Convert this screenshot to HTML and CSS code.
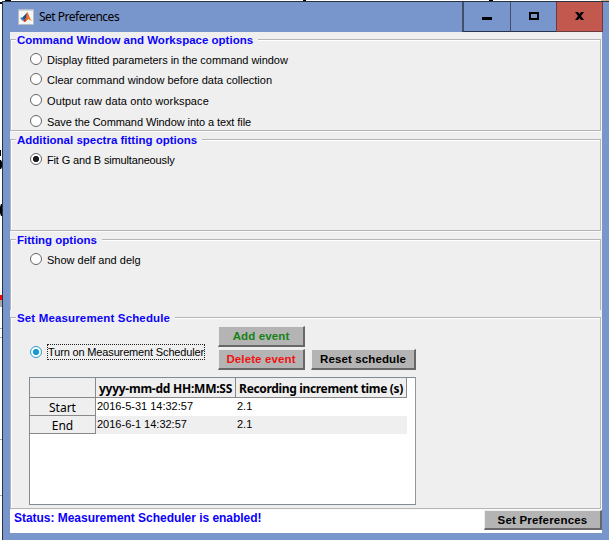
FILE: index.html
```html
<!DOCTYPE html>
<html lang="en">
<head>
<meta charset="utf-8">
<title>Set Preferences</title>
<link rel="stylesheet" href="styles.css">
</head>
<body>
<svg class="backdrop" width="609" height="540" viewBox="0 0 609 540" aria-hidden="true">
  <path fill="#000" d="M0 2h2v2H0zM5 0h6v1H5zM303 0h3v1h-3zM489 0h4v1h-4zM0 150h1v6H0zM0 160h1l1 2v5l-1 2H0zM1 204h1v12H1l-1-3v-6z"/>
  <path fill="#f00" d="M0 295h2v5H0z"/>
  <path fill="#aaa" d="M0 300h2v7H0zM0 328h2v1H0zM0 337h2v1H0zM0 439h2v1H0zM0 495h2v1H0z"/>
  <path fill="#d8b58b" d="M601 0h8v1h-8z"/>
</svg>
<div class="window">
  <header class="titlebar">
    <svg class="logo" width="16" height="16" viewBox="0 0 16 16">
      <path fill="#f4f6f8" stroke="#b8bdc4" d="M.5.5h15v15H.5z"/>
      <path fill="#c9d5e5" d="M1 1h14v1H1z"/>
      <path fill="#3978b5" d="M2 9l3-1 4-4-2 6-2 2z"/>
      <path fill="#254c76" d="M5 8l4-4-1 5-2 2z"/>
      <path fill="#ad301e" d="M9 3l-1 6-3 3 2 1 3-3z"/>
      <path fill="#ec7426" d="M9 3c2 1 2 6 5 9l-4-2-3 3c1-3 2-6 2-10z"/>
    </svg>
    <span class="caption">Set Preferences</span>
    <div class="controls">
      <span class="ctl min"><svg width="10" height="10"><path d="M0 6h10v3H0z"/></svg></span>
      <span class="ctl max"><svg width="10" height="8"><path fill-rule="evenodd" d="M0 0h10v8H0zM2 2v4h6V2z"/></svg></span>
      <span class="ctl close"><svg width="9" height="8"><path d="M0 0h3l1.5 2L6 0h3L6 4l3 4H6L4.5 6 3 8H0l3-4z"/></svg></span>
    </div>
  </header>
  <main class="content">
    <section class="panel command">
      <h2>Command Window and Workspace options</h2>
      <div class="option"><i class="radio"></i><span class="snug">Display fitted parameters in the command window</span></div>
      <div class="option"><i class="radio"></i><span>Clear command window before data collection</span></div>
      <div class="option shifted"><i class="radio"></i><span class="loose">Output raw data onto workspace</span></div>
      <div class="option shifted"><i class="radio"></i><span class="tight">Save the Command Window into a text file</span></div>
    </section>
    <section class="panel spectra">
      <h2>Additional spectra fitting options</h2>
      <div class="option"><i class="radio checked"></i><span class="tighter">Fit G and B simultaneously</span></div>
    </section>
    <section class="panel fitting">
      <h2>Fitting options</h2>
      <div class="option"><i class="radio"></i><span>Show delf and delg</span></div>
    </section>
    <section class="panel schedule">
      <h2>Set Measurement Schedule</h2>
      <div class="toolbar">
        <div class="option"><i class="radio checked active"></i><span class="focus tighter">Turn on Measurement Scheduler</span></div>
        <div class="actions">
          <button class="add">Add event</button>
          <button class="delete">Delete event</button>
          <button class="reset">Reset schedule</button>
        </div>
      </div>
      <div class="table">
        <div class="cell head"></div><div class="cell head date">yyyy-mm-dd HH:MM:SS</div><div class="cell head increment">Recording increment time (s)</div>
        <div class="cell label">Start</div><div class="cell">2016-5-31 14:32:57</div><div class="cell">2.1</div>
        <div class="cell label">End</div><div class="cell alt">2016-6-1 14:32:57</div><div class="cell alt">2.1</div>
      </div>
    </section>
    <footer>
      <span class="status">Status: Measurement Scheduler is enabled!</span>
      <button class="apply">Set Preferences</button>
    </footer>
  </main>
</div>
</body>
</html>
```
FILE: styles.css
```css
* { box-sizing: border-box; }
body { margin: 0; width: 609px; height: 540px; overflow: hidden; background: #fff; color: #000; font: 11px/14px "Liberation Sans", Arial, sans-serif; }
svg { display: block; }
.backdrop { position: absolute; left: 0; top: 0; z-index: -1; }
.window { margin: 1px 0 0 2px; height: 539px; padding-left: 7px; border-top: 1px solid #263441; border-left: 1px solid #263441; background: #7896cc; overflow: hidden; }
.titlebar { display: flex; height: 30px; padding-left: 8px; }
.logo { margin-top: 7px; }
.caption { margin: 6px 0 0 5px; font: 12px/18px "Noto Sans", "Open Sans", sans-serif; letter-spacing: -.5px; white-space: nowrap; }
.controls { display: flex; margin-left: auto; margin-right: 6px; }
.ctl { display: flex; align-items: center; justify-content: center; width: 46px; height: 30px; padding-bottom: 2px; border-left: 1px solid #40506c; border-bottom: 1px solid #26344a; }
.min { width: 48px; border-left-width: 2px; }
.close { width: 47px; background: #c3594e; border-color: #693c40; border-right: 1px solid #693c40; }
.content { display: flex; flex-direction: column; width: 592px; height: 501px; padding-top: 7px; background: #efefef; }
.panel { flex: none; width: 591px; border: 1px solid #b5b5b5; box-shadow: 1px 1px #fafafa, inset 1px 1px #fff; }
.command { height: 92px; }
.spectra { height: 92px; margin-top: 8px; }
.fitting { height: 71px; margin-top: 8px; border-bottom: 0; box-shadow: inset 1px 1px #fff; }
.schedule { height: 192px; margin-top: 7px; }
h2 { display: table; margin: -8px 0 0 5px; height: 15px; padding: 0 5px 0 1px; background: #efefef; color: #0c04fa; font-size: 11.5px; line-height: 16px; white-space: nowrap; }
.schedule h2 { letter-spacing: .15px; }
.option { display: flex; align-items: center; height: 20px; padding-left: 19px; white-space: nowrap; }
h2 + .option { margin-top: 1px; }
.option.shifted { height: 21px; }
.option > span { margin-left: 5px; padding-top: 2px; }
.snug { letter-spacing: -.04px; }
.tight { letter-spacing: -.08px; }
.tighter { letter-spacing: -.15px; }
.loose { letter-spacing: .12px; }
.radio { flex: none; width: 12px; height: 12px; border: 1px solid #666; border-radius: 50%; background: #fff; }
.checked { background: radial-gradient(circle, #1b1b1b 0 2.8px, #fff 3.4px); }
.active { border-color: #2b9bcf; background: radial-gradient(circle, #159bd7 0 2.8px, #fff 3.4px); }
.toolbar { display: flex; height: 51px; }
.toolbar .option { margin-top: 16px; width: 207px; }
.toolbar .option .focus { height: 14px; margin-left: 6px; padding: 0; line-height: 15px; outline: 1px dotted #222; }
.actions { display: grid; grid-template-columns: 87px 105px; grid-template-rows: 21px 21px; gap: 2px 6px; align-content: start; }
button { padding: 0; border: 1px solid; border-width: 1px 2px 2px 1px; border-color: #eee #686868 #686868 #eee; background: #b4b4b4; color: #000; font: bold 11.5px/16px "Liberation Sans", Arial, sans-serif; letter-spacing: .12px; white-space: nowrap; }
.reset { grid-column: 2; }
.delete { grid-column: 1; }
.add { color: #168216; }
.delete { color: #ee1313; }
.table { display: grid; grid-template-columns: 66px 140px 171px; grid-template-rows: 20px 18px 18px; width: 387px; height: 128px; margin-left: 18px; border: 1px solid #808b95; border-right: 1px solid #92979d; background: #fff; }
.cell { padding-left: 1px; line-height: 16px; white-space: nowrap; }
.cell.head, .cell.label { padding-left: 0; border-right: 1px solid #898989; border-bottom: 1px solid #898989; background: #efefef; text-align: center; font-family: "Noto Sans", sans-serif; }
.cell.head { font-size: 12px; font-weight: bold; line-height: 22px; }
.cell.date { letter-spacing: -.24px; }
.cell.increment { letter-spacing: -.34px; }
.cell.label { font-size: 12px; line-height: 19px; }
.cell.alt { background: #efefef; }
footer { display: flex; height: 24px; margin-top: 1px; background: #fff; justify-content: space-between; }
.status { margin: 0 0 0 4px; color: #0b00fa; font-size: 12px; font-weight: bold; line-height: 16px; letter-spacing: -.03px; white-space: nowrap; }
.apply { width: 118px; height: 20px; letter-spacing: .2px; }
```
